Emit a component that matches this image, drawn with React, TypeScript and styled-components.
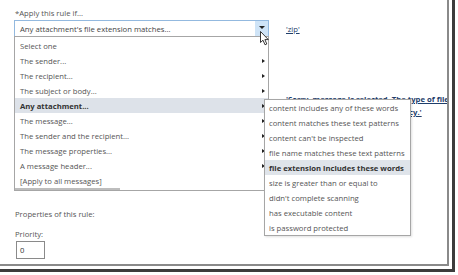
import React from 'react';
import styled, { createGlobalStyle } from 'styled-components';

const GlobalStyle = createGlobalStyle`
  html, body { margin: 0; padding: 0; background: #fff; }
  body {
    width: 458px; height: 275px; overflow: hidden;
    font-family: "Open Sans", "Noto Sans", sans-serif;
  }
`;

const ShadowFrame = styled.div`
  width: 455px;
  height: 272px;
  box-sizing: border-box;
  padding-right: 3px;
  padding-bottom: 3px;
  border-right: 3px solid #3c3c3c;
  border-bottom: 3px solid #3c3c3c;
  background: #fff;
`;

const Page = styled.div`
  position: relative;
  width: 449px;
  height: 266px;
  box-sizing: border-box;
  overflow: hidden;
  padding: 7px 0 0 14px;
  border-right: 2px solid #8a8a8a;
  border-bottom: 2px solid #8a8a8a;
  font-size: 7.7px;
  color: #555;
`;

const Label = styled.div<{ $mt?: number }>`
  margin-left: 1px;
  margin-top: ${p => p.$mt ?? 0}px;
  line-height: 12px;
  height: 12px;
  color: #555;
  white-space: nowrap;
`;

const SelectRow = styled.div`
  display: flex;
  align-items: center;
  gap: 17px;
  margin-top: 1px;
`;

const Select = styled.div`
  position: relative;
  width: 255px;
  height: 17px;
  box-sizing: border-box;
  border: 1px solid #93b9df;
  display: flex;
  align-items: center;
  padding-left: 5px;
  color: #444;
  white-space: nowrap;
`;

const SelectButton = styled.div`
  margin-left: auto;
  width: 13px;
  height: 100%;
  background: #cfe4f7;
  display: flex;
  align-items: center;
  justify-content: center;
  &::after {
    content: "";
    margin-top: -3px;
    border-top: 3px solid #222;
    border-left: 3px solid transparent;
    border-right: 3px solid transparent;
  }
`;

const Link = styled.span<{ $bold?: boolean }>`
  color: #1f3e6b;
  text-decoration: underline;
  font-weight: ${p => (p.$bold ? 700 : 400)};
  white-space: nowrap;
`;

const Message = styled.div`
  margin: 56px 0 0 272px;
  line-height: 13px;
  display: flex;
  flex-direction: column;
`;

const MenuList = styled.div`
  position: absolute;
  top: 15px;
  left: -1px;
  width: 255px;
  box-sizing: border-box;
  border: 1px solid #a6a6a6;
  background: #fff;
  padding-top: 1px;
  z-index: 5;
`;

const MenuRow = styled.div<{ $active?: boolean }>`
  position: relative;
  height: 15px;
  display: flex;
  align-items: center;
  padding: 0 3px 0 5px;
  background: ${p => (p.$active ? '#dde2e9' : 'transparent')};
  color: ${p => (p.$active ? '#333' : '#555')};
  font-weight: ${p => (p.$active ? 700 : 400)};
  white-space: nowrap;
`;

const SubArrow = styled.span`
  margin-left: auto;
  width: 0;
  height: 0;
  border-left: 3px solid #222;
  border-top: 2.5px solid transparent;
  border-bottom: 2.5px solid transparent;
`;

const ScrollThumb = styled.div`
  width: 105px;
  height: 2px;
  background: #bdbdbd;
`;

const SubMenu = styled.div`
  position: absolute;
  top: 1px;
  left: 249px;
  width: 147px;
  box-sizing: border-box;
  border: 1px solid #a6a6a6;
  background: #fff;
  z-index: 6;
  box-shadow: 1px 1px 2px rgba(0,0,0,0.12);
`;

const SubRow = styled.div<{ $active?: boolean }>`
  height: 15px;
  display: flex;
  align-items: center;
  padding-left: 4px;
  background: ${p => (p.$active ? '#dfe4ea' : 'transparent')};
  color: ${p => (p.$active ? '#333' : '#555')};
  font-weight: ${p => (p.$active ? 700 : 400)};
  white-space: nowrap;
`;

const Cursor = styled.svg`
  position: absolute;
  left: 245px;
  top: 10px;
  z-index: 10;
`;

const PriorityInput = styled.div`
  margin: 1px 0 0 2px;
  width: 29px;
  height: 18px;
  box-sizing: border-box;
  border: 1px solid #8a8a8a;
  padding-left: 3px;
  display: flex;
  align-items: center;
  color: #333;
`;

const items = [
  { label: 'Select one', sub: false },
  { label: 'The sender...', sub: true },
  { label: 'The recipient...', sub: true },
  { label: 'The subject or body...', sub: true },
  { label: 'Any attachment...', sub: true, active: true },
  { label: 'The message...', sub: true },
  { label: 'The sender and the recipient...', sub: true },
  { label: 'The message properties...', sub: true },
  { label: 'A message header...', sub: true },
  { label: '[Apply to all messages]', sub: false },
];

const subItems = [
  'content includes any of these words',
  'content matches these text patterns',
  "content can't be inspected",
  'file name matches these text patterns',
  'file extension includes these words',
  'size is greater than or equal to',
  "didn't complete scanning",
  'has executable content',
  'is password protected',
];

export default function App() {
  return (
    <>
      <GlobalStyle />
      <ShadowFrame>
        <Page>
          <Label>*Apply this rule if...</Label>
          <SelectRow>
            <Select>
              Any attachment's file extension matches...
              <SelectButton />
              <Cursor width="10" height="15" viewBox="0 0 10 15">
                <path d="M0.5 0.5 L0.5 11.5 L3 9.2 L5 13.8 L6.8 13 L4.9 8.6 L8.3 8.6 Z" fill="#fff" stroke="#222" strokeWidth="0.9" strokeLinejoin="round" />
              </Cursor>
              <MenuList>
                {items.map((it, i) => (
                  <MenuRow key={i} $active={it.active}>
                    {it.label}
                    {it.sub && <SubArrow />}
                    {it.active && (
                      <SubMenu>
                        {subItems.map((s, j) => (
                          <SubRow key={j} $active={j === 4}>{s}</SubRow>
                        ))}
                      </SubMenu>
                    )}
                  </MenuRow>
                ))}
                <ScrollThumb />
              </MenuList>
            </Select>
            <Link>'zip'</Link>
          </SelectRow>
          <Message>
            <Link $bold>'Sorry, message is rejected. The type of file attached is not</Link>
            <Link $bold>allowed by the organization policy.'</Link>
          </Message>
          <Label $mt={89}>Properties of this rule:</Label>
          <Label $mt={8}>Priority:</Label>
          <PriorityInput>0</PriorityInput>
        </Page>
      </ShadowFrame>
    </>
  );
}
